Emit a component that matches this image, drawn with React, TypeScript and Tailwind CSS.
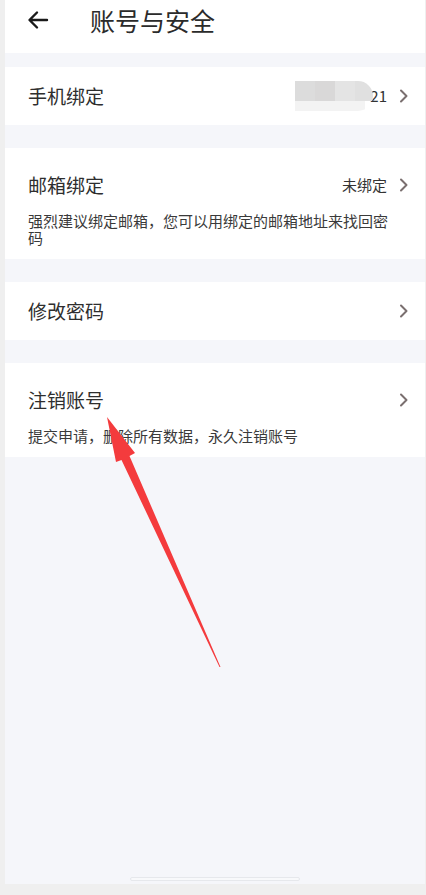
const ChevronRight = () => (
    <svg width="12" height="16" viewBox="0 0 12 16" className="shrink-0">
        <path d="M3 2.5 L8.5 8 L3 13.5" fill="none" stroke="#7a6f6f" strokeWidth="2" strokeLinecap="round" strokeLinejoin="round" />
    </svg>
);

const Row = ({
    title,
    value,
    desc,
    blur,
}: {
    title: string;
    value?: string;
    desc?: string;
    blur?: boolean;
}) => {
    if (desc) {
        return (
            <div className="bg-white pl-[23px] pr-[15px] pt-[25px] pb-[13px]">
                <div className="flex h-6 items-center">
                    <span className="text-[19px] leading-6 text-[#2e2e2e]">{title}</span>
                    <span className="ml-auto text-[15px] text-[#333]">{value}</span>
                    <span className="ml-[11px]">
                        <ChevronRight />
                    </span>
                </div>
                <p className="mt-[15px] pr-[18px] text-[15px] leading-[17px] text-[#3a3a3a]">{desc}</p>
            </div>
        );
    }
    return (
        <div className="flex h-[58px] items-center bg-white pl-[23px] pr-[15px]">
            <span className="text-[19px] leading-6 text-[#2e2e2e]">{title}</span>
            {blur && (
                <div className="ml-auto flex items-center">
                    <div className="relative z-10 flex h-[30px] w-[78px] flex-col overflow-hidden rounded-r-full">
                        <div className="flex h-[20px]">
                            <div className="w-[20px] bg-[#dcdcdc]" />
                            <div className="w-[20px] bg-[#d9d8d8]" />
                            <div className="w-[20px] bg-[#e4e4e4]" />
                            <div className="w-[18px] bg-[#e0e0e0]" />
                        </div>
                        <div className="flex h-[10px] w-[70px] bg-[#f3f3f3]" />
                    </div>
                    <span className="-ml-[3px] text-[15px] text-[#333]">21</span>
                </div>
            )}
            <span className={blur ? 'ml-[11px]' : 'ml-auto'}>
                <ChevronRight />
            </span>
        </div>
    );
};

export default function App() {
    return (
        <div
            className="relative flex h-[895px] w-[426px] flex-col bg-[#efefef] pb-[11px] pl-[5px] pr-[1px]"
            style={{ fontFamily: '"Noto Sans CJK SC", "Noto Sans", sans-serif' }}
        >
            <div className="relative flex flex-1 flex-col bg-[#f5f6fa]">
                <header className="h-[53px] bg-white">
                    <div className="flex h-[40px] items-center pl-[22px]">
                        <svg width="22" height="20" viewBox="0 0 22 20">
                            <path
                                d="M20 10 H3 M10 2.5 L2.5 10 L10 17.5"
                                fill="none"
                                stroke="#1a1a1a"
                                strokeWidth="2.4"
                                strokeLinecap="round"
                                strokeLinejoin="round"
                            />
                        </svg>
                        <h1 className="ml-[41px] text-[25px] leading-8 text-[#2b2b2b]">账号与安全</h1>
                    </div>
                </header>

                <div className="mt-[14px] flex flex-col gap-[23px]">
                    <Row title="手机绑定" blur />
                    <Row
                        title="邮箱绑定"
                        value="未绑定"
                        desc="强烈建议绑定邮箱，您可以用绑定的邮箱地址来找回密码"
                    />
                    <Row title="修改密码" />
                    <Row title="注销账号" desc="提交申请，删除所有数据，永久注销账号" />
                </div>

                <div className="mt-auto mb-[3px] flex justify-center">
                    <div className="h-[4px] w-[170px] rounded-full border border-[#e6e8ec] bg-[#f8f9fb]" />
                </div>
            </div>

            <svg className="pointer-events-none absolute left-0 top-0" width="426" height="895" viewBox="0 0 426 895">
                <polygon
                    points="107,417 135,453 129.5,456 220.5,667 219.5,667 121.5,460 116,462"
                    fill="#f43b3d"
                />
            </svg>
        </div>
    );
}
